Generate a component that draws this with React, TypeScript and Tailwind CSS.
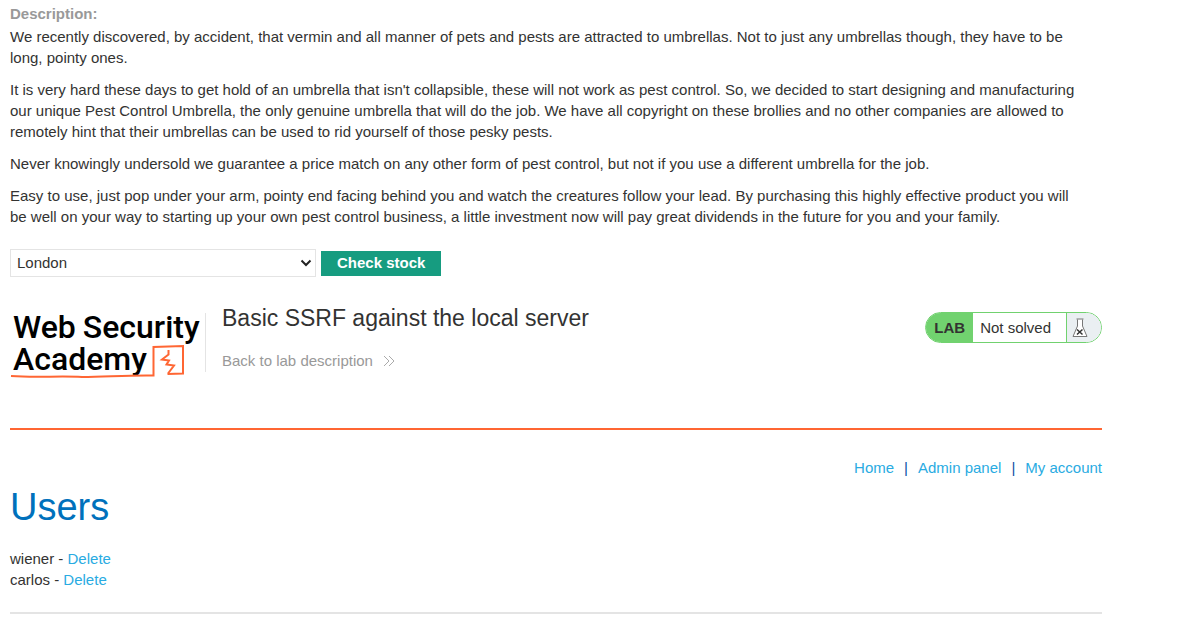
import React from "react";

const paragraphs: string[] = [
  "We recently discovered, by accident, that vermin and all manner of pets and pests are attracted to umbrellas. Not to just any umbrellas though, they have to be long, pointy ones.",
  "It is very hard these days to get hold of an umbrella that isn't collapsible, these will not work as pest control. So, we decided to start designing and manufacturing our unique Pest Control Umbrella, the only genuine umbrella that will do the job. We have all copyright on these brollies and no other companies are allowed to remotely hint that their umbrellas can be used to rid yourself of those pesky pests.",
  "Never knowingly undersold we guarantee a price match on any other form of pest control, but not if you use a different umbrella for the job.",
  "Easy to use, just pop under your arm, pointy end facing behind you and watch the creatures follow your lead. By purchasing this highly effective product you will be well on your way to starting up your own pest control business, a little investment now will pay great dividends in the future for you and your family.",
];

const navLinks = ["Home", "Admin panel", "My account"];
const users = ["wiener", "carlos"];

function Logo() {
  return (
    <a
      href="#academy"
      className="relative block h-[72px] w-[196px] shrink-0 pt-[3px] pl-[3px] font-['Roboto',sans-serif] text-[32px] leading-8 font-medium text-black"
    >
      <span className="flex gap-[7px] whitespace-nowrap">
        <span>Web</span>
        <span>Security</span>
      </span>
      <span className="block">Academy</span>
      <svg
        aria-hidden="true"
        viewBox="0 0 196 72"
        className="absolute inset-0 h-[72px] w-[196px]"
        fill="none"
        stroke="#ff6633"
      >
        <path d="M1 68C28 70 48 67.500 72 69C100 68.500 122 67 143.500 67.500V39L173 38V65.500L157.500 66" strokeWidth="2" />
        <path d="M158.500 42v4.500L152 51.500L159 52.500L156.500 56.500L164 57.500L158 65.500" strokeWidth="2" />
        <path d="M195.500 5v59" stroke="#e4e4e4" />
      </svg>
    </a>
  );
}

function Flask() {
  return (
    <svg aria-hidden="true" viewBox="0 0 16 20" className="h-5 w-4" fill="#fff" stroke="#777" strokeWidth="1">
      <path d="M5.500 1.500V8L1 18.500H15L10.500 8V1.500" />
      <path d="M4.500 1H11.500" />
      <path d="M5 11.500l5.500 5M10.500 11.500l-5.500 5" stroke="#333" strokeWidth="1.5" />
    </svg>
  );
}

export default function App() {
  return (
    <main className="pt-[3px] pr-[87px] pb-7 pl-[10px] font-['Liberation_Sans',Arial,sans-serif] text-[15px] leading-[21px] text-[#333332]">
      <section>
        <h2 className="mb-[2px] font-bold text-[#999]">Description:</h2>
        <div className="flex flex-col gap-[11px] pr-[18px]">
          {paragraphs.map((text) => (
            <p key={text}>{text}</p>
          ))}
        </div>
        <form className="mt-[22px] flex items-end gap-[5px]" onSubmit={(e) => e.preventDefault()}>
          <div className="relative w-[306px]">
            <select
              aria-label="Store location"
              className="block h-7 w-full appearance-none border border-[#e4e4e4] bg-white px-[6px] pb-[2px] text-[15px]"
            >
              <option>London</option>
              <option>Paris</option>
              <option>Milan</option>
            </select>
            <svg
              aria-hidden="true"
              viewBox="0 0 12 8"
              className="pointer-events-none absolute top-[10px] right-1 h-2 w-3"
              fill="none"
              stroke="#222"
              strokeWidth="2"
            >
              <path d="M1.500 1.500L6 6L10.500 1.500" />
            </svg>
          </div>
          <button type="submit" className="mb-px h-[25px] bg-[#169c80] px-4 pb-px leading-6 font-bold text-white">
            Check stock
          </button>
        </form>
      </section>

      <header className="mt-[31px] flex h-[122px] items-start border-b-2 border-[#ff6633]">
        <Logo />
        <div className="ml-4 grow">
          <h1 className="mt-[-4px] text-[23px] leading-7">Basic SSRF against the local server</h1>
          <a href="#description" className="mt-[18px] flex items-center gap-[10px] text-[#999]">
            Back to lab description
            <svg aria-hidden="true" viewBox="0 0 12 12" className="h-3 w-3" fill="none" stroke="#aaa">
              <path d="M1 1l5 5l-5 5M6 1l5 5l-5 5" />
            </svg>
          </a>
        </div>
        <div className="mt-1 flex h-[31px] shrink-0 overflow-hidden rounded-full border border-[#71d26f] leading-[30px]">
          <span className="bg-[#71d26f] px-2 font-bold">LAB</span>
          <span className="bg-white px-[7px] pr-[15px]">Not solved</span>
          <span className="flex w-[35px] items-center border-l border-[#71d26f] bg-[#eaeff2] pl-[5px]">
            <Flask />
          </span>
        </div>
      </header>

      <nav className="mt-[27px] flex justify-end gap-[10px] text-[#0a4fa6]">
        {navLinks.map((label, i) => (
          <React.Fragment key={label}>
            {i > 0 && <span>|</span>}
            <a href="#nav" className="text-[#29abe2]">
              {label}
            </a>
          </React.Fragment>
        ))}
      </nav>

      <section className="border-b-2 border-[#e4e4e4] pb-[22px]">
        <h1 className="mt-[7px] mb-[19px] text-[38px] leading-[44px] text-[#0071bc]">Users</h1>
        <ul>
          {users.map((name) => (
            <li key={name}>
              {name} -{" "}
              <a href="#delete" className="text-[#29abe2]">
                Delete
              </a>
            </li>
          ))}
        </ul>
      </section>
    </main>
  );
}
